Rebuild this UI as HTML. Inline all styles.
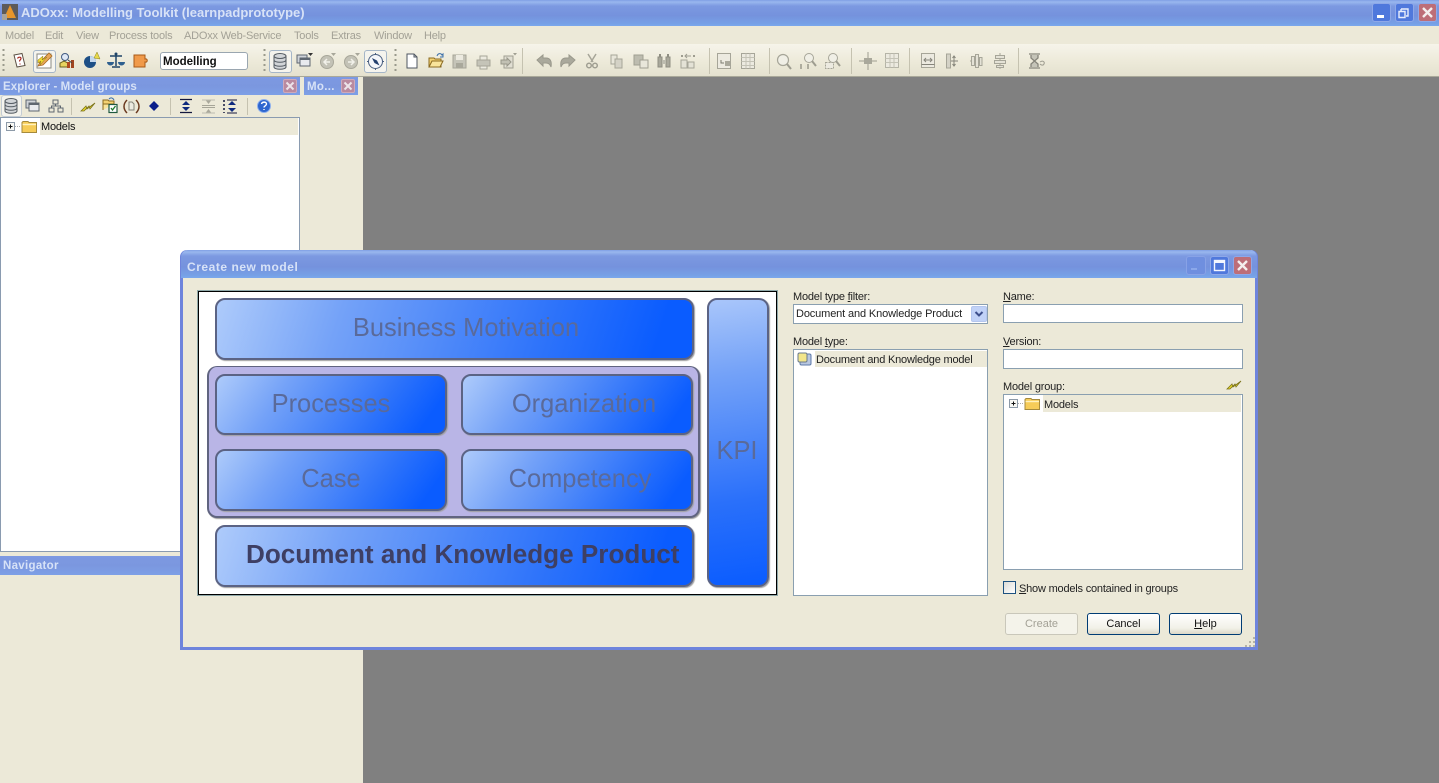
<!DOCTYPE html>
<html><head><meta charset="utf-8"><title>ADOxx</title>
<style>
html,body{margin:0;padding:0;width:1439px;height:783px;overflow:hidden;background:#808080;font-family:"Liberation Sans",Arial,sans-serif;font-size:11px;color:#222}
div,span.a{position:absolute;box-sizing:border-box}
.t{position:absolute;white-space:nowrap;line-height:14px;letter-spacing:-.2px}
.m{top:29px;color:#a3a196;font-size:11px}
.bar{background:linear-gradient(#7f9fe4 0,#99b7ee 2px,#7c99e1 6px,#7592dd 60%,#76a0e6 90%,#7aa8ec 100%)}
.h{background:linear-gradient(#7d99e2,#7b97df 50%,#7d9fe6)}
.wt{color:#d7e2f7;font-weight:bold;white-space:nowrap;position:absolute}
.g{border:2px solid #5b6384;border-radius:10px;background:linear-gradient(125deg,#aecbfa 0,#74a2f8 28%,#2f74fa 68%,#0a5cff 90%);box-shadow:1px 1px 1px #a0a0a0;text-align:center;font-size:25.45px;color:#5a6a9a;line-height:56px;white-space:nowrap}
.w{background:linear-gradient(108deg,#aecbfa 0,#74a2f8 26%,#2f74fa 68%,#0a5cff 92%)}
.inp{background:#fff;border:1px solid #8a9fb0}
.btn{border:1px solid #003c74;border-radius:3px;background:linear-gradient(#fff,#f2f1e8 70%,#dcd8c8);text-align:center;line-height:21px;color:#111;font-size:11px}
.wb{border-radius:3px;border:1px solid #8ea8e8}
.x{background:#b98aa0;border:1px solid #cfa9ba;border-radius:2px}
u{text-decoration:underline}
</style></head><body>

<!-- main frame -->
<div style="left:0;top:0;width:1439px;height:26px" class="bar"></div>
<div style="left:0;top:26px;width:1439px;height:18px;background:#ece9d8"></div>
<div style="left:0;top:44px;width:1439px;height:32px;background:linear-gradient(#f6f4ea,#ece9d8 60%,#e4e1cf)"></div>
<div style="left:0;top:76px;width:1439px;height:1px;background:#a9a899"></div>
<div style="left:0;top:77px;width:363px;height:706px;background:#ece9d8"></div>
<div class="wt" style="left:21px;top:5px;font-size:13px;line-height:16px">ADOxx: Modelling Toolkit (learnpadprototype)</div>

<span class="t m" style="left:5px">Model</span><span class="t m" style="left:45px">Edit</span><span class="t m" style="left:76px">View</span><span class="t m" style="left:109px">Process tools</span><span class="t m" style="left:184px">ADOxx Web-Service</span><span class="t m" style="left:294px">Tools</span><span class="t m" style="left:331px">Extras</span><span class="t m" style="left:374px">Window</span><span class="t m" style="left:424px">Help</span>

<!-- window buttons -->
<div class="wb" style="left:1372px;top:3px;width:19px;height:19px;background:#4f78dc"></div>
<div class="wb" style="left:1395px;top:3px;width:19px;height:19px;background:#4f78dc"></div>
<div class="wb" style="left:1418px;top:3px;width:19px;height:19px;background:#bd6e78"></div>

<!-- toolbar items -->
<div style="left:33px;top:50px;width:23px;height:23px;border:1px solid #a5b6c8;border-radius:3px;background:#f5f4ee"></div>
<div style="left:160px;top:52px;width:88px;height:18px;background:#fff;border:1px solid #9aa6b0;border-radius:3px;font:bold 11.5px/18px 'Liberation Sans',sans-serif;color:#111;padding-left:2px">Modelling</div>
<div style="left:269px;top:50px;width:23px;height:23px;border:1px solid #a5b6c8;border-radius:3px;background:#f5f4ee"></div>
<div style="left:364px;top:50px;width:23px;height:23px;border:1px solid #a5b6c8;border-radius:3px;background:#f5f4ee"></div>

<!-- left panels -->
<div class="h" style="left:0;top:77px;width:300px;height:18px"></div>
<div class="wt" style="left:3px;top:80px;font-size:11.5px;line-height:14px;letter-spacing:.07px">Explorer - Model groups</div>
<div class="x" style="left:283px;top:79px;width:14px;height:14px"></div>
<div class="h" style="left:304px;top:77px;width:54px;height:18px"></div>
<div class="wt" style="left:307px;top:80px;font-size:11.5px;line-height:14px;letter-spacing:.3px">Mo...</div>
<div class="x" style="left:341px;top:79px;width:14px;height:14px"></div>
<div style="left:1px;top:95px;width:21px;height:22px;border:1px solid #c4ccd4;border-radius:3px;background:#f5f4ee"></div>

<div style="left:0;top:117px;width:300px;height:435px;background:#fff;border:1px solid #8a9bb0"></div>
<div style="left:40px;top:118px;width:258px;height:17px;background:#ece9d8"></div>
<span class="t" style="left:41px;top:120px;color:#111">Models</span>

<div class="h" style="left:0;top:556px;width:182px;height:19px"></div>
<div class="wt" style="left:3px;top:559px;font-size:11.5px;line-height:14px;letter-spacing:.3px">Navigator</div>

<!-- dialog -->
<div style="left:180px;top:250px;width:1078px;height:400px;background:#ece9d8;border:3px solid #6e84dc;border-top:0;border-radius:7px 7px 0 0"></div>
<div class="bar" style="left:181px;top:250px;width:1076px;height:28px;border-radius:7px 7px 0 0"></div>
<div class="wt" style="left:187px;top:260px;font-size:12px;line-height:14px;letter-spacing:.54px">Create new model</div>
<div class="wb" style="left:1186px;top:256px;width:20px;height:19px;background:#6f8fdf;border-color:#88a2e6"></div>
<div class="wb" style="left:1210px;top:256px;width:19px;height:19px;background:#4f78dc"></div>
<div class="wb" style="left:1233px;top:256px;width:19px;height:19px;background:#bd6e78"></div>

<!-- picture -->
<div style="left:197px;top:290px;width:581px;height:306px;background:#fff;border:1px solid #8fa8a8"></div>
<div style="left:198px;top:291px;width:579px;height:304px;border:1px solid #000;background:#fff"></div>
<div class="g w" style="left:215px;top:298px;width:479px;height:62px;padding-left:23px;line-height:57px">Business Motivation</div>
<div style="left:207px;top:366px;width:493px;height:152px;background:#b9b5e6;border:2px solid #606480;border-radius:10px;border-top-width:1px;box-shadow:1px 1px 1px #999"></div>
<div class="g" style="left:215px;top:374px;width:232px;height:61px">Processes</div>
<div class="g" style="left:461px;top:374px;width:232px;height:61px;padding-left:14px">Organization</div>
<div class="g" style="left:215px;top:449px;width:232px;height:62px">Case</div>
<div class="g" style="left:461px;top:449px;width:232px;height:62px;padding-left:6px">Competency</div>
<div class="g w" style="left:215px;top:525px;width:479px;height:62px;text-align:left;padding-left:29px;font-size:26.1px;font-weight:bold;color:#3e3f64;line-height:55px">Document and Knowledge Product</div>
<div class="g" style="left:707px;top:298px;width:62px;height:289px;padding-right:2px;background:linear-gradient(172deg,#a9c6fa 0,#74a2f8 26%,#2a70fa 70%,#0a5cff 100%);line-height:302px;color:#5a6a9a">KPI</div>

<!-- dialog right -->
<span class="t" style="left:793px;top:290px">Model type <u>f</u>ilter:</span>
<div class="inp" style="left:793px;top:304px;width:195px;height:20px"></div>
<span class="t" style="left:796px;top:307px;letter-spacing:-.13px">Document and Knowledge Product</span>
<div style="left:971px;top:306px;width:16px;height:16px;background:#c1d2f7;border-radius:2px;border:1px solid #b4c6ee"></div>
<span class="t" style="left:793px;top:335px">Model <u>t</u>ype:</span>
<div class="inp" style="left:793px;top:349px;width:195px;height:247px"></div>
<div style="left:815px;top:351px;width:172px;height:16px;background:#ece9d8"></div>
<span class="t" style="left:816px;top:353px">Document and Knowledge model</span>

<span class="t" style="left:1003px;top:290px"><u>N</u>ame:</span>
<div class="inp" style="left:1003px;top:304px;width:240px;height:19px"></div>
<span class="t" style="left:1003px;top:335px"><u>V</u>ersion:</span>
<div class="inp" style="left:1003px;top:349px;width:240px;height:20px"></div>
<span class="t" style="left:1003px;top:380px">Model <u>g</u>roup:</span>
<div class="inp" style="left:1003px;top:394px;width:240px;height:176px"></div>
<div style="left:1043px;top:395px;width:198px;height:17px;background:#ece9d8"></div>
<span class="t" style="left:1044px;top:398px">Models</span>
<div style="left:1003px;top:581px;width:13px;height:13px;background:linear-gradient(135deg,#dcdcd7,#fff);border:1px solid #1c5180"></div>
<span class="t" style="left:1019px;top:582px"><u>S</u>how models contained in groups</span>
<div class="btn" style="left:1005px;top:613px;width:73px;height:22px;border-color:#c9c7ba;background:#f4f3ea;color:#a3a196">Create</div>
<div class="btn" style="left:1087px;top:613px;width:73px;height:22px">Cancel</div>
<div class="btn" style="left:1169px;top:613px;width:73px;height:22px"><u>H</u>elp</div>

<!-- icon overlay -->
<svg width="1439" height="783" viewBox="0 0 1439 783" style="position:absolute;left:0;top:0" xmlns="http://www.w3.org/2000/svg" fill="none">
<!-- app icon -->
<rect x="2" y="4" width="16" height="16" fill="#5c5a58"/><path d="M4 18 L10 5 L16 18Z" fill="#e8962a"/><path d="M2 14h5v6H2z" fill="#a8a39a"/>
<!-- window buttons glyphs -->
<rect x="1377" y="15" width="7" height="3" fill="#fff"/>
<path d="M1401 9h7v7h-2M1401 9v2M1399 11.5h6v6h-6z" stroke="#e8eefc" stroke-width="1.4"/>
<path d="M1423 8l9 9M1432 8l-9 9" stroke="#f4eeee" stroke-width="2.4"/>
<rect x="1191" y="268" width="6" height="2" fill="#8ba8ea"/>
<rect x="1214.5" y="260.5" width="10" height="10" stroke="#f2f5fe" stroke-width="1.4"/><rect x="1214" y="260" width="11" height="3" fill="#f2f5fe"/>
<path d="M1238 261l9 9M1247 261l-9 9" stroke="#f4eeee" stroke-width="2.4"/>
<!-- panel close x -->
<path d="M286.500 82.500l7 7M293.500 82.500l-7 7M344.500 82.500l7 7M351.500 82.500l-7 7" stroke="#ece4ea" stroke-width="2"/>
<!-- grips -->
<path d="M3.500 49v24M264.500 49v24M395.500 49v24" stroke="#9a9a8c" stroke-width="2" stroke-dasharray="2 3"/>
<!-- separators -->
<path d="M522.500 48v26M709.500 48v26M769.500 48v26M851.500 48v26M909.500 48v26M1018.500 48v26" stroke="#c5c2b0"/>
<path d="M71.500 98v17M170.500 98v17M247.500 98v17" stroke="#c5c2b0"/>
<!-- help doc -->
<path d="M14 55l8-1.500 3 12-8 1.500z" fill="#fff" stroke="#5d5245"/><path d="M17.500 58.500c1-2 3.500-1.500 3.500 0s-1.500 1-1.500 3M20 63.500v1" stroke="#a82a20" stroke-width="1.200"/>
<!-- pencil -->
<rect x="37" y="54" width="14" height="14" fill="#fff" stroke="#8a8a82"/><path d="M38 66l2-4 9-9 3 3-9 9z" fill="#e9a85a" stroke="#a86a20" stroke-width=".8"/><path d="M38 60l5-4-1 4 5-3-7 8 1-4-3 2z" fill="#f2dc34" stroke="#8b7a10" stroke-width=".5"/>
<!-- analysis -->
<circle cx="65" cy="57" r="3.500" fill="#dfe8f5" stroke="#415a80"/><path d="M60 67v-4l4-2 4 2v4z" fill="#e8d460" stroke="#6a6020"/><rect x="67" y="62" width="3" height="6" fill="#b04a20"/><rect x="71" y="60" width="3" height="8" fill="#a04520"/><path d="M68 60l4 3" stroke="#444"/>
<!-- ball -->
<circle cx="90" cy="62" r="6" fill="#1d4f86"/><path d="M90 56a6 6 0 0 1 6 6h-6z" fill="#c4d8ee"/><path d="M94 58l3-6 3 7z" fill="#e7d94a" stroke="#8a8020" stroke-width=".5"/>
<!-- scales -->
<path d="M116 53v13M110 56h12M112 67h8" stroke="#1f4468" stroke-width="1.500"/><path d="M107 62h7a3.500 3.500 0 0 1-7 0zM118 62h7a3.500 3.500 0 0 1-7 0z" fill="#2e5f8e"/><circle cx="116" cy="54" r="1.500" fill="#1f4468"/>
<!-- puzzle -->
<path d="M134 55h11v4c3-1 3 4 0 3v5h-11z" fill="#f09a4a" stroke="#a85a18"/>
<!-- db -->
<g stroke="#555c63" fill="#d2d5d8"><path d="M274 56v11c0 3 12 3 12 0V56z"/><ellipse cx="280" cy="56" rx="6" ry="2.500"/><path d="M274 60c0 3 12 3 12 0M274 64c0 3 12 3 12 0" fill="none"/></g>
<!-- windows -->
<rect x="297" y="55" width="10" height="8" fill="#cfd3d8" stroke="#5e6670"/><rect x="300" y="58" width="10" height="8" fill="#e8eaee" stroke="#5e6670"/><path d="M300 58h10v2h-10z" fill="#5e6670"/><path d="M308 53h5l-2.500 3z" fill="#333"/>
<!-- nav gray -->
<circle cx="327" cy="62" r="6.500" fill="#c3c2b6" stroke="#a8a79a"/><path d="M330 62h-5M327 59l-3 3 3 3" stroke="#f2f1ea" stroke-width="1.500"/><path d="M331 53h5l-2.500 3z" fill="#a8a79a"/>
<circle cx="351" cy="62" r="6.500" fill="#c3c2b6" stroke="#a8a79a"/><path d="M348 62h5M351 59l3 3-3 3" stroke="#f2f1ea" stroke-width="1.500"/><path d="M355 53h5l-2.500 3z" fill="#a8a79a"/>
<!-- compass -->
<circle cx="375.500" cy="61.500" r="7" fill="#f4f6fa" stroke="#4a5f80"/><path d="M372 58l5 2.500 2.500 5-5-2.500z" fill="#24406e"/><path d="M375.500 53v2M375.500 68v2M367 61.500h2M382 61.500h2" stroke="#4a5f80"/>
<!-- new, open, save, print -->
<path d="M407 54h7l3 3v11h-10z" fill="#fff" stroke="#4e5660"/><path d="M414 54v3h3" stroke="#4e5660"/>
<path d="M429 67v-9h5l1 1h6v8z" fill="#f4d272" stroke="#8a6a20"/><path d="M429 67l3-6h11l-3 6z" fill="#f9e49a" stroke="#8a6a20"/><path d="M437 56c1-3 4-3 5-1l1-1v3h-3" stroke="#3a6ea8"/>
<rect x="453" y="55" width="13" height="13" fill="#c5c4b8" stroke="#a6a598"/><rect x="456" y="55" width="7" height="5" fill="#eceae0"/><rect x="456" y="63" width="7" height="5" fill="#a9a89b"/>
<path d="M480 56h7v4h-7z" fill="#eceae0" stroke="#a6a598"/><path d="M477 60h13v6h-13z" fill="#c5c4b8" stroke="#a6a598"/><path d="M480 66h7v3h-7z" fill="#eceae0" stroke="#a6a598"/>
<!-- export -->
<path d="M504 56h9v12h-9z" fill="#e0ded2" stroke="#a09f92"/><path d="M501 60h6v-2l4 4-4 4v-2h-6z" fill="#c2c1b4" stroke="#98978a"/><path d="M513 53h4l-2 2.500z" fill="#a09f92"/>
<!-- undo/redo -->
<path d="M537 60l6-5v3h3c4 0 6 3 5 9-1-3-3-4-5-4h-3v3z" fill="#aaa99c" stroke="#9a998c"/>
<path d="M575 60l-6-5v3h-3c-4 0-6 3-5 9 1-3 3-4 5-4h3v3z" fill="#aaa99c" stroke="#9a998c"/>
<!-- cut -->
<path d="M588 54l5 8M596 54l-5 8" stroke="#a6a598" stroke-width="1.500"/><circle cx="589" cy="65.500" r="2.300" stroke="#a09f92" stroke-width="1.500"/><circle cx="595" cy="65.500" r="2.300" stroke="#a09f92" stroke-width="1.500"/>
<!-- copy / paste -->
<path d="M611 55h6v9h-6z" fill="#e8e6da" stroke="#a6a598"/><path d="M615 59h7v9h-7z" fill="#d4d2c6" stroke="#a6a598"/>
<path d="M634 55h9v10h-9z" fill="#bdbcaf" stroke="#a09f92"/><path d="M640 60h8v8h-8z" fill="#e8e6da" stroke="#a09f92"/>
<!-- binoculars -->
<path d="M658 57h4v10h-4zM666 57h4v10h-4z" fill="#a9a89b" stroke="#8f8e82"/><path d="M662 60h4v4h-4z" fill="#bdbcaf"/><path d="M659 54h2v3h-2zM667 54h2v3h-2z" fill="#8f8e82"/>
<!-- replace -->
<path d="M681 55h2v2h-2zM693 55h2v2h-2z" fill="#9e9d90"/><path d="M685 56h6M687 54l-2 2 2 2" stroke="#9e9d90"/><path d="M681 60h6v8h-6z" fill="#e4e2d6" stroke="#a6a598"/><path d="M688 62h6v6h-6z" fill="#e4e2d6" stroke="#a6a598"/>
<!-- layout -->
<rect x="717.500" y="53.500" width="13" height="15" fill="#eceae0" stroke="#a6a598"/><rect x="725" y="61" width="5" height="5" fill="#a9a89b"/><path d="M721 60v3h3" stroke="#7a796e"/>
<rect x="741.500" y="53.500" width="13" height="15" fill="#eceae0" stroke="#a6a598"/><path d="M741.500 57.500h13M741.500 61.500h13M741.500 65.500h13M746 53.500v15M750 53.500v15" stroke="#c4c3b6"/>
<!-- zoom -->
<circle cx="783" cy="60" r="5.500" fill="#f0efe6" stroke="#a6a598" stroke-width="1.200"/><path d="M787 64l4 5" stroke="#9e9d90" stroke-width="2"/>
<circle cx="809" cy="58" r="4.500" fill="#f0efe6" stroke="#a6a598"/><path d="M812 61l4 5" stroke="#9e9d90" stroke-width="2"/><path d="M801 64v5M805 66h.1M805 68h.1M808 64v5" stroke="#8e8d80" stroke-width="1.300"/>
<circle cx="833" cy="58" r="4.500" fill="#f0efe6" stroke="#a6a598"/><path d="M836 61l4 5" stroke="#9e9d90" stroke-width="2"/><rect x="825.500" y="62.500" width="8" height="6" fill="#eceae0" stroke="#a6a598" stroke-dasharray="2 1"/>
<!-- align -->
<path d="M868 52v18M859 61h18" stroke="#9e9d90"/><rect x="864" y="58" width="8" height="6" fill="#a9a89b"/>
<rect x="885.500" y="53.500" width="13" height="14" fill="#eceae0" stroke="#b5b4a7"/><path d="M885.500 58.500h13M885.500 62.500h13M890 53.500v14M894 53.500v14" stroke="#c4c3b6"/>
<rect x="921.500" y="53.500" width="13" height="14" fill="#eceae0" stroke="#a6a598"/><path d="M924 60h8M926 58l-2 2 2 2M930 58l2 2-2 2M921.500 64.500h13" stroke="#85847a"/>
<path d="M946.500 54h4v14h-4z" fill="#d4d2c6" stroke="#a6a598"/><path d="M954 56v10M951 61h7M952.500 58l1.500-2 1.500 2M952.500 64l1.500 2 1.500-2" stroke="#85847a"/>
<path d="M970 61h12" stroke="#a6a598"/><rect x="971.500" y="56.500" width="3" height="9" fill="#e4e2d6" stroke="#a6a598"/><rect x="975.500" y="54.500" width="3" height="13" fill="#e4e2d6" stroke="#a6a598"/><rect x="979.500" y="57.500" width="2.500" height="8" fill="#e4e2d6" stroke="#a6a598"/>
<path d="M1000 53v16" stroke="#a6a598"/><rect x="995.500" y="55.500" width="9" height="3" fill="#e4e2d6" stroke="#a6a598"/><rect x="994.500" y="60.500" width="11" height="3" fill="#e4e2d6" stroke="#a6a598"/><rect x="996.500" y="65.500" width="7" height="2" fill="#e4e2d6" stroke="#a6a598"/>
<!-- hourglass -->
<path d="M1029 54h11M1029 68h11M1031 55v3l3.500 3 3.500-3v-3M1031 67v-3l3.500-3 3.500 3v3" stroke="#85847a" stroke-width="1.300" fill="#c5c4b8"/><path d="M1040 62c3-2 5 0 4 2s-3 1-4 0" stroke="#9e9d90"/>

<!-- explorer toolbar -->
<g stroke="#555c63" fill="#d2d5d8"><path d="M5 101v10c0 3 12 3 12 0v-10z"/><ellipse cx="11" cy="101" rx="6" ry="2.500"/><path d="M5 104.500c0 3 12 3 12 0M5 108c0 3 12 3 12 0" fill="none"/></g>
<rect x="26" y="100" width="10" height="8" fill="#cfd3d8" stroke="#5e6670"/><rect x="29" y="103" width="10" height="8" fill="#e8eaee" stroke="#5e6670"/><path d="M29 103h10v2H29z" fill="#5e6670"/>
<path d="M53 100h5v4h-5zM49 108h5v4h-5zM58 108h5v4h-5zM55.500 104v2M51.500 108v-2h9v2" stroke="#5e6670" fill="#ece9d8"/>
<path d="M81 111l5-5 1 3 8-6-5 6-1-3-5 5-3 0z" fill="#e6d52a" stroke="#7a7218" stroke-width=".8"/>
<path d="M103 104v-4h5l1 1h5v3" fill="#f4d272" stroke="#8a6a20"/><path d="M103 110v-6h11" fill="#f9e49a" stroke="#8a6a20"/><rect x="109" y="104.500" width="8" height="8" fill="#fff" stroke="#1f5a40" stroke-width="1.200"/><path d="M111 108l1.500 2 3-4" stroke="#1f7a30" stroke-width="1.300"/><path d="M109 99c2-2 4-1 5 1" stroke="#3a6ea8"/>
<path d="M127 100c-4 4-4 9 0 13M136 100c4 4 4 9 0 13" stroke="#6b3a20" stroke-width="1.500"/><path d="M129 102h3l2 2v6h-5z" fill="#eceae0" stroke="#85847a"/>
<path d="M154 101l5 5-5 5-5-5z" fill="#0b1f8a"/>
<path d="M180 99.500h12M180 112.500h12" stroke="#13183e" stroke-width="1.300"/><path d="M186 101l4 4h-8zM186 111l4-4h-8z" fill="#0f2a7e"/>
<path d="M202 105.500h13M202 107.500h13" stroke="#a6a598"/><path d="M208.500 104l-3-4h6zM208.500 109l-3 4h6z" fill="#a9a89b"/><path d="M202 100h13M202 113h13" stroke="#bdbcaf"/>
<path d="M224 100v13" stroke="#13183e" stroke-width="1.500" stroke-dasharray="2 2"/><path d="M227 100h10M227 113h10" stroke="#13183e"/><path d="M232 101l4 4h-8zM232 112l4-4h-8z" fill="#0f2a7e"/>
<circle cx="264" cy="106" r="6.500" fill="#2e66cf" stroke="#8db0ee"/><path d="M261.500 104c.5-2.500 5-2.500 5 0 0 1.800-2.500 1.800-2.500 3.500M264 109v1" stroke="#fff" stroke-width="1.400"/>

<!-- tree 1 -->
<rect x="6.500" y="122.500" width="8" height="8" fill="#f8f8f4" stroke="#8d9aa8"/><path d="M8.500 126.500h4M10.500 124.500v4" stroke="#111"/><path d="M15 126.500h6" stroke="#aaa" stroke-dasharray="1 1"/>
<path d="M22 132.500v-10l1-1h5l1 1h7.500v10z" fill="#f6cc58" stroke="#a58a3c"/><path d="M22.500 124.500h13.500" stroke="#fff2c0" stroke-width="1.400"/>

<!-- select chevron -->
<path d="M975.500 312l3.500 3.500 3.500-3.500" stroke="#3d4f8c" stroke-width="2"/>
<!-- model type icon -->
<rect x="800" y="354" width="11" height="11" rx="1.500" fill="#b9c7e0" stroke="#5d7aa8"/><rect x="798" y="353" width="9" height="9" rx="1.500" fill="#f2e58a" stroke="#6b7a8c"/>
<!-- lightning group -->
<path d="M1227 389l5-5 1 3 8-6-5 6-1-3-5 5-3 0z" fill="#e6d52a" stroke="#7a7218" stroke-width=".8"/>
<!-- tree 2 -->
<rect x="1009.500" y="399.500" width="8" height="8" fill="#f8f8f4" stroke="#8d9aa8"/><path d="M1011.500 403.500h4M1013.500 401.500v4" stroke="#111"/><path d="M1018 403.500h6" stroke="#aaa" stroke-dasharray="1 1"/>
<path d="M1025 409.500v-10l1-1h5l1 1h7.500v10z" fill="#f6cc58" stroke="#a58a3c"/><path d="M1025.500 401.500h13.500" stroke="#fff2c0" stroke-width="1.400"/>
<!-- resize grip -->
<path d="M1253 637h2v2h-2zM1249 641h2v2h-2zM1253 641h2v2h-2zM1245 645h2v2h-2zM1249 645h2v2h-2zM1253 645h2v2h-2z" fill="#b6b4a4"/>
</svg>
</body></html>
